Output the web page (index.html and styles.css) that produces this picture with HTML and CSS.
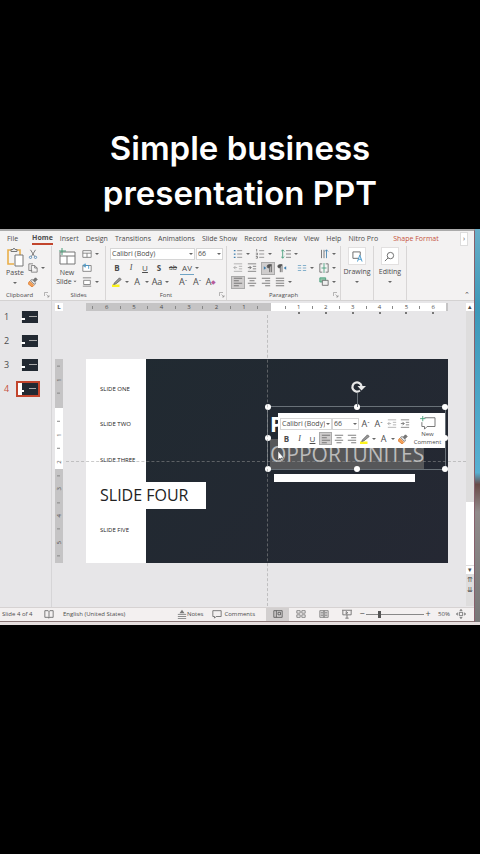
FILE: index.html
```html
<!DOCTYPE html>
<html lang="en">

<head>
    <meta charset="utf-8">
    <meta name="viewport" content="width=device-width, initial-scale=1">
    <title>Simple business presentation PPT</title>
    <link rel="stylesheet" href="styles.css">
</head>

<body>
    <!-- icon symbols -->
    <svg class="sprite" aria-hidden="true">
        <symbol id="caret" viewBox="0 0 6 12"><path d="M1 5l2 2 2-2z" fill="#666" /></symbol>
        <symbol id="paste" viewBox="0 0 18 20">
            <path d="M5 3H2v14h6M11 3h3v5" fill="none" stroke="#e9ae49" stroke-width="1.6" />
            <path d="M5 4.500V2.500h2l1-1.500 1 1.500h2v2z" fill="#eee" stroke="#777" />
            <path d="M9 8h8v11H9z" fill="#fff" stroke="#777" />
        </symbol>
        <symbol id="cut" viewBox="0 0 12 12">
            <path d="M3 1l5 8M9 1L4 9" fill="none" stroke="#666" />
            <circle cx="3" cy="10" r="1.400" fill="none" stroke="#4e86b5" /><circle cx="9" cy="10" r="1.400" fill="none" stroke="#4e86b5" />
        </symbol>
        <symbol id="copy" viewBox="0 0 12 12"><path d="M5 9H1V1h5M4 3h4l3 3v5H4zM8 3v3h3" fill="none" stroke="#777" /></symbol>
        <symbol id="painter" viewBox="0 0 12 12">
            <path d="M2 5l5 5-2 2-5-4z" fill="#f4a259" stroke="#d9772b" />
            <path d="M3 4l2-1 4 4-1 2z" fill="#fff" stroke="#666" /><path d="M6 4l3-3 2 2-3 3" fill="#777" stroke="#666" />
        </symbol>
        <symbol id="new-slide" viewBox="0 0 18 18">
            <path d="M2 4h15v12H2zM2 8h15M9 8v8" fill="#fff" stroke="#777" /><path d="M4 0v7M1 3h7" stroke="#4a9b78" fill="none" />
        </symbol>
        <symbol id="layout" viewBox="0 0 12 12"><path d="M1 2h10v8H1zM1 5h10M6 5v5" fill="#fff" stroke="#777" /></symbol>
        <symbol id="reset" viewBox="0 0 12 12"><path d="M1 3h10v7H1z" fill="#fff" stroke="#777" /><path d="M1 3l3-2v4zM4 3h4v4" fill="none" stroke="#3d94c9" /></symbol>
        <symbol id="section" viewBox="0 0 12 12"><path d="M1 1h10M2 4h8v5H2zM1 11h10" fill="#fff" stroke="#777" /></symbol>
        <symbol id="marker" viewBox="0 0 12 12">
            <path d="M0 9h9v3H0z" fill="#fbf31e" /><path d="M3 7l6-6 2 2-6 5-3 1z" fill="#999" stroke="#666" />
        </symbol>
        <symbol id="bullets" viewBox="0 0 12 12"><path d="M1 2h2M1 6h2M1 10h2" stroke="#3f7fae" stroke-width="1.500" /><path d="M5 2h6M5 6h6M5 10h6" stroke="#888" /></symbol>
        <symbol id="numbers" viewBox="0 0 12 12"><path d="M2 0v3M1 5h2v2H1M1 9h2v2H1" stroke="#777" fill="none" /><path d="M5 2h6M5 6h6M5 10h6" stroke="#888" /></symbol>
        <symbol id="spacing" viewBox="0 0 12 12"><path d="M2 1v10M0 3l2-2 2 2M0 9l2 2 2-2" stroke="#429c78" fill="none" /><path d="M6 2h6M6 6h6M6 10h6" stroke="#777" /></symbol>
        <symbol id="outdent" viewBox="0 0 12 12"><path d="M1 1h10M7 4h4M7 7h4M1 10h10M5 5.500H1m2-2l-2 2 2 2" stroke="#aaa" fill="none" /></symbol>
        <symbol id="indent" viewBox="0 0 12 12"><path d="M1 1h10M7 4h4M7 7h4M1 10h10" stroke="#777" /><path d="M1 5.500h4m-2-2l2 2-2 2" stroke="#666" fill="none" /></symbol>
        <symbol id="ltr" viewBox="0 0 12 12"><path d="M1 4l3 2-3 2z" fill="#3f7fae" /><path d="M10 2H7a2 2 0 000 4zM8 2v9M10 2v9" fill="#555" stroke="#555" /></symbol>
        <symbol id="rtl" viewBox="0 0 12 12"><path d="M11 4L8 6l3 2z" fill="#3f7fae" /><path d="M6 2H3a2 2 0 000 4zM4 2v9M6 2v9" fill="#555" stroke="#555" /></symbol>
        <symbol id="columns" viewBox="0 0 12 12"><path d="M1 3h4M1 6h4M1 9h4M7 3h4M7 6h4M7 9h4" stroke="#6fa3c4" /></symbol>
        <symbol id="direction" viewBox="0 0 12 12"><path d="M3 1v10M6 1v10" stroke="#666" /><path d="M9 11V1M7 3l2-2 2 2" stroke="#3f7fae" fill="none" /></symbol>
        <symbol id="align-text" viewBox="0 0 12 12"><path d="M4 1H1v10h3M8 1h3v10H8" stroke="#666" fill="none" /><path d="M6 0v12M3 6h6" stroke="#429c78" /></symbol>
        <symbol id="smartart" viewBox="0 0 12 12"><path d="M1 1h7v5H1z" fill="#8fc4a8" stroke="#429c78" /><path d="M4 4h7v6H4z" fill="#eee" stroke="#666" /></symbol>
        <symbol id="left" viewBox="0 0 12 12"><path d="M1 1.500h10M1 4.500h6M1 7.500h10M1 10.500h6" stroke="#666" /></symbol>
        <symbol id="center" viewBox="0 0 12 12"><path d="M1 1.500h10M3 4.500h6M1 7.500h10M3 10.500h6" stroke="#666" /></symbol>
        <symbol id="right" viewBox="0 0 12 12"><path d="M1 1.500h10M5 4.500h6M1 7.500h10M5 10.500h6" stroke="#666" /></symbol>
        <symbol id="justify" viewBox="0 0 12 12"><path d="M1 1.500h10M1 4.500h10M1 7.500h10M1 10.500h10" stroke="#666" /></symbol>
        <symbol id="launcher" viewBox="0 0 12 12"><path d="M1 8V1h7M5 5l5 5M10 6v4H6" stroke="#777" fill="none" /></symbol>
        <symbol id="drawing" viewBox="0 0 12 12"><path d="M7 8H1V1h8v4" stroke="#666" fill="none" /><path d="M6 11.500l2.500-7 2.500 7M7 9h3" stroke="#3d94c9" fill="none" /></symbol>
        <symbol id="search" viewBox="0 0 12 12"><circle cx="7" cy="5" r="3.500" stroke="#666" fill="none" /><path d="M4.500 7.500L1 11" stroke="#666" /></symbol>
        <symbol id="comment" viewBox="0 0 18 16"><path d="M5 2h12v10H8l-3 3v-3H2V7" stroke="#666" fill="none" /><path d="M3 0v6M0 3h6" stroke="#429c78" /></symbol>
        <symbol id="bubble" viewBox="0 0 12 12"><path d="M1 2h10v7H5l-2 2V9H1z" stroke="#666" fill="none" /></symbol>
        <symbol id="notes" viewBox="0 0 12 12"><path d="M3 5l3-4 3 4z" fill="#777" /><path d="M1 6.500h10M1 9h10M1 11.500h10" stroke="#777" /></symbol>
        <symbol id="book" viewBox="0 0 12 12"><path d="M6 3L5 2H1v8h4l1 1 1-1h4V2H7zv8" stroke="#666" fill="none" /></symbol>
        <symbol id="normal" viewBox="0 0 12 12"><path d="M1 2h10v8H1zM4 2v8M6 4h3v3H6z" stroke="#555" fill="none" /></symbol>
        <symbol id="sorter" viewBox="0 0 12 12"><path d="M1 2h4v3H1zM7 2h4v3H7zM1 7h4v3H1zM7 7h4v3H7z" stroke="#777" fill="none" /></symbol>
        <symbol id="reading" viewBox="0 0 12 12"><path d="M1 2h5v8H1zM6 2h5v8H6zM2 4h3M2 6h3M2 8h3M7 4h3M7 6h3M7 8h3" stroke="#777" fill="none" /></symbol>
        <symbol id="show" viewBox="0 0 12 12"><path d="M0 1.500h12M1 2v5h10V2M6 7v4M4 11h4M5 3v3l2-1.500z" stroke="#666" fill="none" /></symbol>
        <symbol id="fit" viewBox="0 0 12 12"><path d="M4 4h4v4H4z" stroke="#666" fill="none" /><path d="M6 0l2 2H4zM6 12l2-2H4zM0 6l2-2v4zM12 6l-2-2v4z" fill="#666" /></symbol>
        <symbol id="rotate" viewBox="0 0 16 14"><path d="M10 10.500A4.600 4.600 0 1 1 11.500 6" fill="none" stroke="#e8e8e8" stroke-width="2.200" /><path d="M7.500 6H16l-4.500 4.500z" fill="#e8e8e8" /></symbol>
    </svg>

    <h1 class="caption">Simple business<br>presentation PPT</h1>

    <div class="desktop">
        <div class="app">
            <nav class="tabs">
                <a href="#">File</a>
                <a href="#" class="active">Home</a>
                <a href="#">Insert</a>
                <a href="#">Design</a>
                <a href="#">Transitions</a>
                <a href="#">Animations</a>
                <a href="#">Slide Show</a>
                <a href="#">Record</a>
                <a href="#">Review</a>
                <a href="#">View</a>
                <a href="#">Help</a>
                <a href="#">Nitro Pro</a>
                <a href="#" class="context">Shape Format</a>
                <button class="tabs-more" aria-label="More tabs">›</button>
            </nav>

            <div class="ribbon">
                <section class="group clipboard">
                    <div class="tools">
                        <button class="big"><svg class="big-icon"><use href="#paste" /></svg>Paste<svg class="caret"><use href="#caret" /></svg></button>
                        <div class="rows">
                            <div class="row"><button class="btn" aria-label="Cut"><svg><use href="#cut" /></svg></button></div>
                            <div class="row"><button class="btn" aria-label="Copy"><svg><use href="#copy" /></svg></button><svg class="caret"><use href="#caret" /></svg></div>
                            <div class="row"><button class="btn" aria-label="Format Painter"><svg><use href="#painter" /></svg></button></div>
                        </div>
                    </div>
                    <div class="name">Clipboard<svg class="launcher"><use href="#launcher" /></svg></div>
                </section>

                <section class="group slides">
                    <div class="tools">
                        <button class="big"><svg class="big-icon"><use href="#new-slide" /></svg>New<span class="with-caret">Slide<svg class="caret"><use href="#caret" /></svg></span></button>
                        <div class="rows">
                            <div class="row"><button class="btn" aria-label="Layout"><svg><use href="#layout" /></svg></button><svg class="caret"><use href="#caret" /></svg></div>
                            <div class="row"><button class="btn" aria-label="Reset"><svg><use href="#reset" /></svg></button></div>
                            <div class="row"><button class="btn" aria-label="Section"><svg><use href="#section" /></svg></button><svg class="caret"><use href="#caret" /></svg></div>
                        </div>
                    </div>
                    <div class="name">Slides</div>
                </section>

                <section class="group font">
                    <div class="tools rows">
                        <div class="row fields">
                            <label class="field family"><select aria-label="Font"><option>Calibri (Body)</option></select><svg class="caret"><use href="#caret" /></svg></label>
                            <label class="field size"><select aria-label="Font size"><option>66</option></select><svg class="caret"><use href="#caret" /></svg></label>
                        </div>
                        <div class="row">
                            <button class="btn bold">B</button>
                            <button class="btn italic">I</button>
                            <button class="btn underline">U</button>
                            <button class="btn bold">S</button>
                            <button class="btn strike">ab</button>
                            <button class="btn spread">AV</button><svg class="caret"><use href="#caret" /></svg>
                        </div>
                        <div class="row">
                            <button class="btn" aria-label="Highlight"><svg><use href="#marker" /></svg></button><svg class="caret"><use href="#caret" /></svg>
                            <button class="btn letter">A</button><svg class="caret"><use href="#caret" /></svg>
                            <button class="btn letter">Aa</button><svg class="caret"><use href="#caret" /></svg>
                            <button class="btn letter push">A<sup>ˆ</sup></button>
                            <button class="btn letter">A<sup>ˇ</sup></button>
                            <button class="btn letter clear">A<sub>◆</sub></button>
                        </div>
                    </div>
                    <div class="name">Font<svg class="launcher"><use href="#launcher" /></svg></div>
                </section>

                <section class="group paragraph">
                    <div class="tools">
                        <div class="rows">
                            <div class="row">
                                <button class="btn" aria-label="Bullets"><svg><use href="#bullets" /></svg></button><svg class="caret"><use href="#caret" /></svg>
                                <button class="btn near" aria-label="Numbering"><svg><use href="#numbers" /></svg></button><svg class="caret"><use href="#caret" /></svg>
                                <button class="btn push" aria-label="Line Spacing"><svg><use href="#spacing" /></svg></button><svg class="caret"><use href="#caret" /></svg>
                            </div>
                            <div class="row">
                                <button class="btn" aria-label="Decrease Indent"><svg><use href="#outdent" /></svg></button>
                                <button class="btn" aria-label="Increase Indent"><svg><use href="#indent" /></svg></button>
                                <button class="btn on near" aria-label="Left-to-Right"><svg><use href="#ltr" /></svg></button>
                                <button class="btn" aria-label="Right-to-Left"><svg><use href="#rtl" /></svg></button>
                                <button class="btn push" aria-label="Columns"><svg><use href="#columns" /></svg></button><svg class="caret"><use href="#caret" /></svg>
                            </div>
                            <div class="row">
                                <button class="btn on" aria-label="Align Left"><svg><use href="#left" /></svg></button>
                                <button class="btn" aria-label="Center"><svg><use href="#center" /></svg></button>
                                <button class="btn" aria-label="Align Right"><svg><use href="#right" /></svg></button>
                                <button class="btn" aria-label="Justify"><svg><use href="#justify" /></svg></button><svg class="caret"><use href="#caret" /></svg>
                            </div>
                        </div>
                        <div class="rows">
                            <div class="row"><button class="btn" aria-label="Text Direction"><svg><use href="#direction" /></svg></button><svg class="caret"><use href="#caret" /></svg></div>
                            <div class="row"><button class="btn" aria-label="Align Text"><svg><use href="#align-text" /></svg></button><svg class="caret"><use href="#caret" /></svg></div>
                            <div class="row"><button class="btn" aria-label="SmartArt"><svg><use href="#smartart" /></svg></button><svg class="caret"><use href="#caret" /></svg></div>
                        </div>
                    </div>
                    <div class="name">Paragraph<svg class="launcher"><use href="#launcher" /></svg></div>
                </section>

                <section class="group collapsed">
                    <button class="big"><span class="tile"><svg><use href="#drawing" /></svg></span>Drawing<svg class="caret"><use href="#caret" /></svg></button>
                </section>
                <section class="group collapsed">
                    <button class="big"><span class="tile"><svg><use href="#search" /></svg></span>Editing<svg class="caret"><use href="#caret" /></svg></button>
                </section>
                <button class="collapse" aria-label="Collapse ribbon">⌃</button>
            </div>

            <div class="workspace">
                <ol class="thumbs">
                    <li><span>1</span><i class="thumb"></i></li>
                    <li><span>2</span><i class="thumb"></i></li>
                    <li><span>3</span><i class="thumb"></i></li>
                    <li class="current"><span>4</span><i class="thumb"></i></li>
                </ol>

                <div class="editor">
                    <div class="corner">L</div>
                    <div class="ruler">
                        <div class="off left-off"><b></b><b>6</b><b></b><b>5</b><b></b><b>4</b><b></b><b>3</b><b></b><b>2</b><b></b><b>1</b><b></b></div>
                        <div class="live"><b></b><b class="stop">1</b><b></b><b class="stop">2</b><b></b><b class="stop">3</b><b></b><b class="stop">4</b><b></b><b class="stop">5</b><b></b><b class="stop">6</b></div>
                    </div>
                    <div class="vruler">
                        <div class="off"><b></b><b>1</b><b></b></div>
                        <div class="live"><b></b><b>1</b><b></b><b>2</b></div>
                        <div class="off"><b></b><b>3</b><b></b><b>4</b><b></b><b>5</b><b></b></div>
                    </div>
                    <main class="stage">
                        <div class="slide">
                            <div class="side"></div>
                            <p class="item one">SLIDE ONE</p>
                            <p class="item two">SLIDE TWO</p>
                            <p class="item three">SLIDE THREE</p>
                            <p class="item four">SLIDE FOUR</p>
                            <p class="item five">SLIDE FIVE</p>
                            <div class="bar"></div>
                            <div class="textbox">
                                <p class="line-one">P</p>
                                <p class="line-two">OPPORTUNITES</p>
                                <i class="handle nw"></i><i class="handle n"></i><i class="handle ne"></i>
                                <i class="handle w"></i><i class="handle e"></i>
                                <i class="handle sw"></i><i class="handle s"></i><i class="handle se"></i>
                                <i class="stem"></i>
                                <svg class="rotate"><use href="#rotate" /></svg>
                            </div>
                        </div>
                        <i class="guide down"></i>
                        <i class="guide across"></i>

                        <div class="mini">
                            <div class="mini-rows">
                                <div class="row">
                                    <label class="field family"><select aria-label="Font"><option>Calibri (Body)</option></select><svg class="caret"><use href="#caret" /></svg></label>
                                    <label class="field size"><select aria-label="Font size"><option>66</option></select><svg class="caret"><use href="#caret" /></svg></label>
                                    <button class="btn letter">A<sup>ˆ</sup></button>
                                    <button class="btn letter">A<sup>ˇ</sup></button>
                                    <button class="btn" aria-label="Decrease Indent"><svg><use href="#outdent" /></svg></button>
                                    <button class="btn" aria-label="Increase Indent"><svg><use href="#indent" /></svg></button>
                                </div>
                                <div class="row">
                                    <button class="btn bold">B</button>
                                    <button class="btn italic">I</button>
                                    <button class="btn underline">U</button>
                                    <button class="btn on" aria-label="Align Left"><svg><use href="#left" /></svg></button>
                                    <button class="btn" aria-label="Center"><svg><use href="#center" /></svg></button>
                                    <button class="btn" aria-label="Align Right"><svg><use href="#right" /></svg></button>
                                    <button class="btn" aria-label="Highlight"><svg><use href="#marker" /></svg></button><svg class="caret"><use href="#caret" /></svg>
                                    <button class="btn letter">A</button><svg class="caret"><use href="#caret" /></svg>
                                    <button class="btn" aria-label="Format Painter"><svg><use href="#painter" /></svg></button>
                                </div>
                            </div>
                            <button class="new-comment"><svg><use href="#comment" /></svg><span>New</span><span>Comment</span></button>
                        </div>
                        <svg class="pointer" viewBox="0 0 8 12"><path d="M1 0v9l2-2 2 4 1-1-2-3h3z" fill="#fff" stroke="#444" stroke-width=".5" /></svg>
                    </main>
                    <div class="scroll">
                        <button aria-label="Scroll up">▴</button>
                        <span class="thumb-bar"></span>
                        <button aria-label="Scroll down">▾</button>
                        <button class="page" aria-label="Previous slide">⇈</button>
                        <button class="page" aria-label="Next slide">⇊</button>
                    </div>
                </div>
            </div>

            <footer class="status">
                <span class="count">Slide 4 of 4</span>
                <svg class="icon"><use href="#book" /></svg>
                <span class="lang">English (United States)</span>
                <button class="notes"><svg class="icon"><use href="#notes" /></svg>Notes</button>
                <button class="comments"><svg class="icon"><use href="#bubble" /></svg>Comments</button>
                <button class="view on" aria-label="Normal"><svg class="icon"><use href="#normal" /></svg></button>
                <button class="view" aria-label="Slide Sorter"><svg class="icon"><use href="#sorter" /></svg></button>
                <button class="view" aria-label="Reading View"><svg class="icon"><use href="#reading" /></svg></button>
                <button class="view" aria-label="Slide Show"><svg class="icon"><use href="#show" /></svg></button>
                <button class="zoom-step">−</button>
                <input type="range" class="zoom" min="0" max="100" value="22" aria-label="Zoom">
                <button class="zoom-step">+</button>
                <span class="percent">50%</span>
                <button class="fit" aria-label="Fit slide"><svg class="icon"><use href="#fit" /></svg></button>
            </footer>
        </div>
    </div>
</body>

</html>
```
FILE: styles.css
```css
* {
    box-sizing: border-box;
}

body {
    margin: 0;
    min-height: 100vh;
    background: #000;
    color: #4c4c4c;
    font-family: "Open Sans", "Noto Sans", sans-serif;
    font-size: 7px;
    line-height: 10px;
}

p,
ol {
    margin: 0;
    padding: 0;
}

button,
select {
    margin: 0;
    padding: 0;
    border: 0;
    background: none;
    color: inherit;
    font: inherit;
}

svg {
    display: block;
    flex: none;
}

.sprite {
    position: absolute;
    width: 0;
    height: 0;
}

.caption {
    margin: 0;
    padding: 126px 0 13px;
    color: #fff;
    font-family: Inter, sans-serif;
    font-size: 33px;
    font-weight: 600;
    line-height: 45px;
    text-align: center;
}

/* window */

.desktop {
    padding-right: 5px;
    border-bottom: 3px solid #e6dfdf;
    background: linear-gradient(#68aec8, #3f98b8 20%, #58b0d2 62%, #6a4b48 65%, #918b8b 72%, #777);
}

.app {
    border-top: 2px solid #aaa;
    border-right: 1px solid #87606c;
    background: #f3f2f2;
}

.tabs {
    display: flex;
    align-items: center;
    gap: 7px;
    height: 15px;
    padding-left: 7px;
    white-space: nowrap;
}

.tabs a {
    color: #4c4c4c;
    line-height: 12px;
    text-decoration: none;
}

.tabs .active {
    margin-left: 7px;
    border-bottom: 2px solid #c2452d;
    font-weight: 700;
    line-height: 11px;
}

.tabs .context {
    margin-left: 8px;
    color: #c65340;
}

.tabs-more {
    width: 8px;
    height: 14px;
    margin: 0 6px 0 auto;
    border: 1px solid #ddd;
    background: #fff;
}

/* ribbon */

.ribbon {
    display: flex;
    height: 55px;
    border-bottom: 1px solid #d4d2d2;
}

.group {
    display: flex;
    flex-direction: column;
    justify-content: space-between;
    border-right: 1px solid #d8d6d6;
}

.clipboard {
    width: 52px;
}

.slides {
    width: 54px;
}

.font {
    width: 121px;
}

.paragraph {
    width: 114px;
}

.collapsed {
    width: 33px;
    align-items: center;
}

.tools {
    display: flex;
    justify-content: space-between;
    padding: 1px 3px 0 4px;
}

.rows {
    display: flex;
    flex-direction: column;
}

.tools.rows {
    justify-content: flex-start;
}

.row {
    display: flex;
    align-items: center;
    height: 14px;
}

.clipboard .rows,
.slides .rows {
    flex: 1;
}

.slides .rows {
    padding-left: 2px;
}

.btn {
    display: flex;
    align-items: center;
    justify-content: center;
    flex: none;
    width: 14px;
    height: 13px;
    font-size: 8px;
}

.btn svg {
    width: 10px;
    height: 10px;
}

.btn.on {
    background: #cfcdcd;
    box-shadow: inset 0 0 0 1px #aaa;
}

.caret {
    width: 6px;
    height: 12px;
}

.near {
    margin-left: 2px;
}

.push {
    margin-left: 6px;
}

.bold {
    font-weight: 700;
}

.italic {
    font-family: "Liberation Serif", serif;
    font-style: italic;
}

.underline {
    text-decoration: underline;
}

.strike {
    font-size: 7px;
    text-decoration: line-through;
}

.spread {
    border-bottom: 1px solid #6fa3c4;
}

.letter {
    font-size: 9px;
}

.letter sup,
.letter sub {
    font-size: 6px;
    line-height: 6px;
}

.clear sub {
    color: #b65b9b;
}

.big {
    display: flex;
    flex-direction: column;
    align-items: center;
    min-width: 22px;
    line-height: 9px;
}

.big-icon {
    width: 18px;
    height: 20px;
    margin-bottom: 1px;
}

.with-caret {
    display: flex;
}

.with-caret .caret {
    height: 9px;
}

.tile {
    display: grid;
    place-items: center;
    width: 18px;
    height: 18px;
    margin: 1px 0 2px;
    border: 1px solid #e2e0e0;
    background: #fff;
}

.tile svg {
    width: 11px;
    height: 11px;
}

.field {
    display: flex;
    align-items: center;
    height: 12px;
    border: 1px solid #d6d6d6;
    background: #fff;
}

.field select {
    flex: 1;
    min-width: 0;
    padding-left: 1px;
    appearance: none;
}

.fields {
    gap: 1px;
}

.family {
    width: 85px;
}

.size {
    width: 27px;
}

.name {
    position: relative;
    font-size: 6px;
    line-height: 10px;
    text-align: center;
}

.launcher {
    position: absolute;
    top: 2px;
    right: 1px;
    width: 6px;
    height: 6px;
}

.clipboard .name {
    padding-right: 12px;
}

.collapse {
    align-self: flex-end;
    margin: 0 4px 0 auto;
}

/* slides pane and editor */

.workspace {
    display: flex;
    background: #e7e6e8;
}

.thumbs {
    width: 52px;
    padding-top: 4px;
    border-right: 1px solid #d6d5d7;
    list-style: none;
}

.thumbs li {
    display: flex;
    align-items: center;
    gap: 7px;
    height: 24px;
    padding-left: 4px;
    font-size: 9px;
}

.thumb {
    width: 24px;
    height: 16px;
    border: 2px solid transparent;
    border-left-width: 5px;
    background: linear-gradient(#aaa, #aaa) 8px 5px / 8px 1px no-repeat, linear-gradient(#fff, #fff) 0 7px / 4px 2px no-repeat, linear-gradient(90deg, #ddd 1px, #222932 1px) padding-box;
}

.current {
    color: #c65340;
}

.current .thumb {
    border-width: 2px;
    border-color: #c2452d;
    background: linear-gradient(#aaa, #aaa) 11px 5px / 7px 1px no-repeat, linear-gradient(#fff, #fff) 0 7px / 6px 2px no-repeat, linear-gradient(90deg, #fff 4px, #222932 4px) padding-box;
}

.editor {
    flex: 1;
    display: grid;
    grid-template-columns: 8px 1fr 8px;
    grid-template-rows: 8px auto;
    min-width: 0;
    padding: 2px 0 1px 3px;
}

.corner {
    background: #fff;
    font-size: 6px;
    font-weight: 700;
    line-height: 8px;
    text-align: center;
}

.ruler {
    display: flex;
    margin: 0 18px 0 23px;
}

.ruler div,
.vruler div {
    display: flex;
}

.ruler b,
.vruler b {
    position: relative;
    display: grid;
    place-items: center;
    flex: 1;
    font-size: 6px;
    font-weight: 400;
    line-height: 8px;
}

.ruler b:empty::before,
.vruler b:empty::before {
    content: "";
    width: 1px;
    height: 3px;
    background: #888;
}

.vruler b:empty::before {
    width: 3px;
    height: 1px;
}

.off {
    background: #c5c4c5;
}

.live {
    background: #fff;
}

.ruler .left-off {
    width: 51%;
    padding-right: 6px;
}

.ruler .live {
    width: 49%;
    padding: 0 6px 0 8px;
    border-right: 2px solid #c5c4c5;
}

.stop::after {
    content: "";
    position: absolute;
    top: 9px;
    width: 2px;
    height: 2px;
    background: #777;
}

.vruler {
    grid-row: 2;
    display: flex;
    flex-direction: column;
    margin: 48px 0 43px;
}

.vruler div {
    flex-direction: column;
    height: 24%;
    padding-bottom: 8px;
}

.vruler .live {
    height: 30%;
    padding: 6px 0 0;
}

.vruler .live + .off {
    height: 46%;
    padding: 0;
}

.vruler b {
    writing-mode: vertical-rl;
    transform: rotate(180deg);
}

.stage {
    position: relative;
    grid-row: 2;
    grid-column: 2;
    margin: 48px 18px 43px 23px;
}

.slide {
    position: relative;
    aspect-ratio: 16 / 9;
    background: linear-gradient(135deg, #202a31, #252833);
}

.side {
    width: 60px;
    height: 100%;
    background: #fff;
}

.item {
    position: absolute;
    left: 14px;
    color: #222;
    font-size: 6px;
    line-height: 10px;
}

.one {
    top: 25px;
}

.two {
    top: 60px;
}

.three {
    top: 96px;
}

.four {
    top: 123px;
    left: 0;
    width: 120px;
    padding-left: 14px;
    background: #fff;
    color: #222;
    font-size: 16px;
    line-height: 27px;
}

.five {
    top: 166px;
}

.bar {
    position: absolute;
    top: 115px;
    left: 52%;
    width: 39%;
    height: 8px;
    background: #fff;
}

.textbox {
    position: absolute;
    top: 47px;
    left: 50%;
    right: 2px;
    height: 64px;
    padding-left: 2px;
    border: 1px solid #697178;
    color: #fff;
    font-size: 21px;
    line-height: 30px;
}

.line-one {
    padding-top: 2px;
    font-weight: 700;
}

.line-two {
    width: fit-content;
    background: #565759;
    color: #bbb;
}

.handle {
    position: absolute;
    width: 6px;
    height: 6px;
    margin: -3px;
    border-radius: 50%;
    background: #fff;
}

.nw,
.n,
.ne {
    top: 0;
}

.w,
.e {
    top: 50%;
}

.sw,
.s,
.se {
    top: 100%;
}

.nw,
.w,
.sw {
    left: 0;
}

.n,
.s {
    left: 50%;
}

.ne,
.e,
.se {
    left: 100%;
}

.stem {
    position: absolute;
    bottom: 100%;
    left: 50%;
    height: 14px;
    border-left: 1px solid #697178;
}

.rotate {
    position: absolute;
    top: -27px;
    left: 50%;
    width: 16px;
    height: 14px;
    margin-left: -7px;
}

.guide {
    position: absolute;
    opacity: .5;
}

.down {
    top: -44px;
    bottom: -43px;
    left: 50%;
    border-left: 1px dashed #999;
}

.across {
    top: 50%;
    left: -20px;
    right: -18px;
    border-top: 1px dashed #999;
}

.mini {
    position: absolute;
    top: 54px;
    right: 3px;
    display: flex;
    width: 167px;
    height: 35px;
    padding: 3px 4px 2px 2px;
    background: #fff;
}

.mini-rows {
    flex: 1;
}

.mini .row {
    height: 15px;
}

.mini .family {
    width: 52px;
}

.mini .btn {
    width: 13px;
}

.new-comment {
    display: flex;
    flex-direction: column;
    align-items: center;
    width: 27px;
    font-size: 6px;
    line-height: 8px;
}

.new-comment svg {
    width: 16px;
    height: 14px;
}

.pointer {
    position: absolute;
    top: 92px;
    left: 191px;
    width: 8px;
    height: 12px;
}

.scroll {
    grid-row: 1 / 3;
    grid-column: 3;
    display: flex;
    flex-direction: column;
    background: #dedddd;
}

.scroll button {
    height: 8px;
    background: #fff;
    line-height: 8px;
}

.thumb-bar {
    height: 63px;
    margin: auto 0 1px;
    background: #fff;
}

.scroll .page {
    height: 10px;
    background: none;
    line-height: 10px;
}

.scroll .page:last-child {
    margin-bottom: 11px;
}

.scroll .thumb-bar + button {
    margin-bottom: 1px;
}

/* status bar */

.status {
    display: flex;
    align-items: center;
    height: 15px;
    padding-left: 2px;
    border-top: 1px solid #d6d2d2;
    border-bottom: 1px solid #8b7777;
    background: #f3f0f0;
    font-size: 6px;
    white-space: nowrap;
}

.icon {
    width: 10px;
    height: 10px;
}

.lang {
    margin-left: 9px;
}

.count {
    width: 42px;
}

.status button {
    display: flex;
    align-items: center;
    justify-content: center;
}

.notes {
    margin-left: auto;
}

.comments {
    gap: 2px;
    margin: 0 11px 0 9px;
}

.view {
    width: 23px;
    height: 13px;
}

.view.on {
    background: #d2cfcf;
}

.zoom-step {
    width: 8px;
    font-size: 9px;
}

.zoom {
    width: 58px;
    height: 8px;
    margin: 0;
    appearance: none;
    background: linear-gradient(#888, #888) center / 100% 1px no-repeat;
}

.zoom::-webkit-slider-thumb {
    appearance: none;
    width: 3px;
    height: 7px;
    background: #555;
}

.percent {
    width: 24px;
    text-align: center;
}

.fit {
    margin-right: 8px;
}
```
